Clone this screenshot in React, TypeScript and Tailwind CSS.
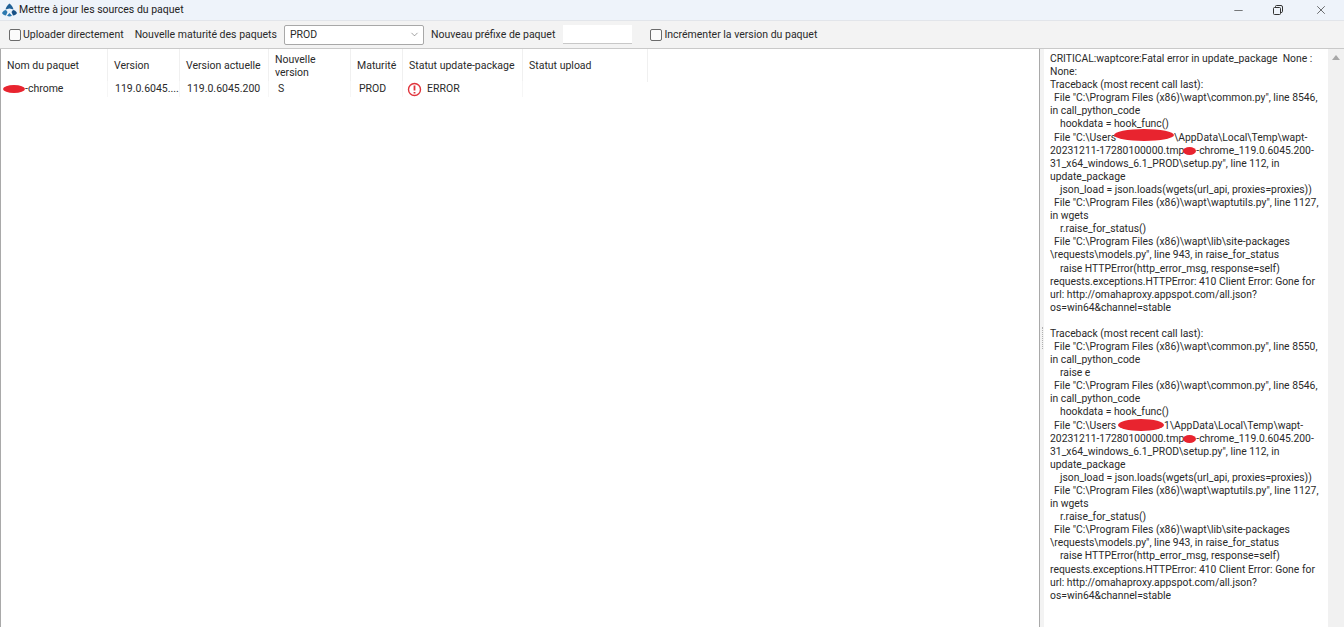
import React from "react"
import { ChevronDown, Minus, X } from "lucide-react"

const COLUMNS = [
    { label: "Nom du paquet", width: "w-[107px]" },
    { label: "Version", width: "w-[72px]" },
    { label: "Version actuelle", width: "w-[89px]" },
    { label: "Nouvelle version", width: "w-[82px]" },
    { label: "Maturité", width: "w-[52px]" },
    { label: "Statut update-package", width: "w-[120px]" },
    { label: "Statut upload", width: "w-[125px]" },
]

const Blot = ({ className }: { className: string }) => (
    <span className={`inline-block rounded-[50%] bg-[#e8242f] ${className}`} />
)

const WaptLogo = () => (
    <svg width="15" height="14" viewBox="0 0 15 14" className="shrink-0">
        <path d="M7.5 0.5 C10 2.5 11 4.5 11.5 6.5 L7.5 5.5 L3.5 6.5 C4 4.5 5 2.5 7.5 0.5 Z" fill="#1f5f96" />
        <path d="M0 10 C1 8 2.5 7 4 7 L5.5 9 L4 12.5 C2 12.5 0.8 11.5 0 10 Z" fill="#2a78b0" />
        <path d="M15 10 C14 8 12.5 7 11 7 L9.5 9 L11 12.5 C13 12.5 14.2 11.5 15 10 Z" fill="#174f85" />
        <path d="M5 12.7 L7.5 10 L10 12.7 C8.5 13.6 6.5 13.6 5 12.7 Z" fill="#2a78b0" />
    </svg>
)

const Check = ({ label }: { label: string }) => (
    <label className="flex items-center gap-[2px]">
        <span className="h-[12px] w-[12px] rounded-[2px] border border-[#6b6b6b] bg-[#fbfbfb]" />
        {label}
    </label>
)

const Indent = ({ n, children }: { n: 1 | 2; children: React.ReactNode }) => (
    <div className={n === 1 ? "pl-[4px]" : "pl-[10px]"}>{children}</div>
)

const TraceTail = ({ first }: { first: boolean }) => (
    <>
        <Indent n={2}>hookdata = hook_func()</Indent>
        <Indent n={1}>
            File "C:\Users
            {first ? (
                <Blot className="my-[-4px] ml-[-2px] h-[12px] w-[60px] align-[4px]" />
            ) : (
                <Blot className="my-[-4px] ml-[2px] h-[12px] w-[46px] align-[2px]" />
            )}
            {first ? "" : "1"}\AppData\Local\Temp\wapt-
        </Indent>
        <div>
            20231211-17280100000.tmp
            <Blot className="my-[-2px] ml-[-1px] h-[8px] w-[13px] align-[1px]" />
            -chrome_119.0.6045.200-
        </div>
        <div>31_x64_windows_6.1_PROD\setup.py", line 112, in</div>
        <div>update_package</div>
        <Indent n={2}>json_load = json.loads(wgets(url_api, proxies=proxies))</Indent>
        <Indent n={1}>File "C:\Program Files (x86)\wapt\waptutils.py", line 1127,</Indent>
        <div>in wgets</div>
        <Indent n={2}>r.raise_for_status()</Indent>
        <Indent n={1}>File "C:\Program Files (x86)\wapt\lib\site-packages</Indent>
        <div>\requests\models.py", line 943, in raise_for_status</div>
        <Indent n={2}>raise HTTPError(http_error_msg, response=self)</Indent>
        <div>requests.exceptions.HTTPError: 410 Client Error: Gone for</div>
        <div>url: http://omahaproxy.appspot.com/all.json?</div>
        <div>os=win64&amp;channel=stable</div>
    </>
)

export default function App() {
    return (
        <div className="flex h-[627px] w-[1344px] flex-col overflow-hidden bg-[#f3f3f3] font-['Roboto',sans-serif] text-[10.5px] text-[#2a2a2a]">
            {/* Title bar */}
            <div className="flex h-[20px] shrink-0 items-center bg-[#eef3fa] pl-[2px]">
                <WaptLogo />
                <span className="ml-[2px] text-[#222]">Mettre à jour les sources du paquet</span>
                <div className="ml-auto flex items-center text-[#333]">
                    <Minus size={13} strokeWidth={1.2} className="mr-[28px]" />
                    <svg width="10" height="10" viewBox="0 0 10 10" fill="none" stroke="#333" className="mr-[31px]">
                        <rect x="0.5" y="2.5" width="7" height="7" rx="1" />
                        <path d="M2.5 2.5 V1.5 Q2.5 0.5 3.5 0.5 H8 Q9.5 0.5 9.5 2 V6.5 Q9.5 7.5 8 7.5" />
                    </svg>
                    <X size={14} strokeWidth={1.2} className="mr-[16px]" />
                </div>
            </div>

            {/* Toolbar */}
            <div className="flex h-[28px] shrink-0 items-center border-t border-[#e2e5ea] pl-[9px]">
                <Check label="Uploader directement" />
                <span className="ml-[11px]">Nouvelle maturité des paquets</span>
                <div className="ml-[7px] flex h-[20px] w-[140px] items-center justify-between rounded-[2px] border border-[#a8a8a8] bg-white pl-[5px] pr-[3px]">
                    PROD
                    <ChevronDown size={11} strokeWidth={1.2} className="text-[#555]" />
                </div>
                <span className="ml-[7px]">Nouveau préfixe de paquet</span>
                <div className="ml-[8px] h-[19px] w-[69px] border-b border-[#c8c8c8] bg-white" />
                <div className="ml-[18px]">
                    <Check label="Incrémenter la version du paquet" />
                </div>
            </div>

            {/* Body */}
            <div className="flex min-h-0 flex-1 border-t border-[#c9c9c9]">
                <div className="w-[1040px] shrink-0 border-l border-r border-[#a9a9a9] bg-white">
                    <div className="flex h-[33px]">
                        {COLUMNS.map((col) => (
                            <div
                                key={col.label}
                                className={`flex items-center border-r border-[#f0f0f0] pl-[6px] pr-[2px] leading-[13px] ${col.width}`}
                            >
                                {col.label}
                            </div>
                        ))}
                    </div>
                    <div className="flex h-[14px] items-center">
                        <div className="flex w-[107px] items-center border-r border-[#f6f6f6] pl-[2px]">
                            <Blot className="h-[8px] w-[22px]" />
                            -chrome
                        </div>
                        <div className="w-[72px] border-r border-[#f6f6f6] pl-[7px]">119.0.6045....</div>
                        <div className="w-[89px] border-r border-[#f6f6f6] pl-[7px]">119.0.6045.200</div>
                        <div className="w-[82px] border-r border-[#f6f6f6] pl-[9px]">S</div>
                        <div className="w-[52px] border-r border-[#f6f6f6] pl-[8px]">PROD</div>
                        <div className="flex w-[120px] items-center border-r border-[#f6f6f6] pl-[4px]">
                            <svg width="15" height="15" viewBox="0 0 15 15" fill="none" stroke="#e0343c" strokeWidth="1.4" className="mr-[5px]">
                                <circle cx="7.5" cy="7.5" r="6" />
                                <path d="M7.5 3.5 V8.6 M7.5 10 V11.5" strokeWidth="1.8" />
                            </svg>
                            ERROR
                        </div>
                        <div className="w-[125px]" />
                    </div>
                </div>

                {/* Splitter */}
                <div className="flex w-[4px] shrink-0 items-center justify-center">
                    <div className="h-[22px] w-[1px] border-l border-dotted border-[#b0b0b0]" />
                </div>

                {/* Log memo */}
                <div className="flex-1 overflow-hidden bg-white pl-[6px] pt-[3px] text-[10.35px] leading-[13.1px] whitespace-nowrap">
                    <div>CRITICAL:waptcore:Fatal error in update_package&nbsp; None :</div>
                    <div>None:</div>
                    <div>Traceback (most recent call last):</div>
                    <Indent n={1}>File "C:\Program Files (x86)\wapt\common.py", line 8546,</Indent>
                    <div>in call_python_code</div>
                    <TraceTail first />
                    <div className="h-[13px]" />
                    <div>Traceback (most recent call last):</div>
                    <Indent n={1}>File "C:\Program Files (x86)\wapt\common.py", line 8550,</Indent>
                    <div>in call_python_code</div>
                    <Indent n={2}>raise e</Indent>
                    <Indent n={1}>File "C:\Program Files (x86)\wapt\common.py", line 8546,</Indent>
                    <div>in call_python_code</div>
                    <TraceTail first={false} />
                </div>

                {/* Scrollbar */}
                <div className="flex w-[16px] shrink-0 justify-center bg-[#f1f1f1] pt-[6px]">
                    <div className="h-0 w-0 border-x-[4px] border-b-[5px] border-x-transparent border-b-[#a8a8a8]" />
                </div>
            </div>
        </div>
    )
}
